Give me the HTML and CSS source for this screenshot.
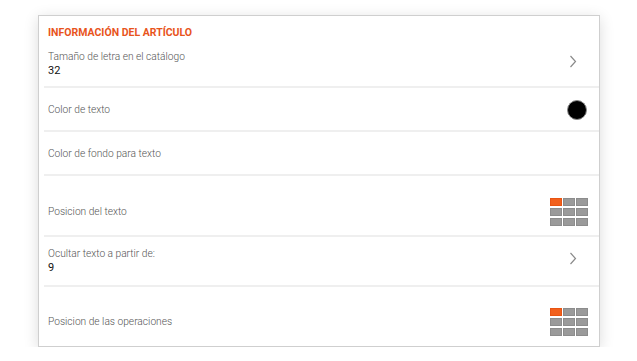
FILE: index.html
```html
<!DOCTYPE html>
<html lang="es">
<head>
    <meta charset="UTF-8">
    <meta name="viewport" content="width=device-width, initial-scale=1.0">
    <title>Información del artículo</title>
    <link rel="stylesheet" href="styles.css">
</head>
<body>

<div class="card">
    <div class="header">INFORMACIÓN DEL ARTÍCULO</div>

    <div class="row row-43">
        <div class="text">
            <div class="label">Tamaño de letra en el catálogo</div>
            <div class="value">32</div>
        </div>
        <svg class="chevron" width="8" height="13" viewBox="0 0 8 13">
            <path d="M1.5 1 L6.5 6.5 L1.5 12" fill="none" stroke="#8a8a8a" stroke-width="1.2"/>
        </svg>
    </div>

    <div class="row row-44">
        <div class="label">Color de texto</div>
        <span class="swatch"></span>
    </div>

    <div class="row row-44">
        <div class="label">Color de fondo para texto</div>
    </div>

    <div class="row row-pos">
        <div class="label">Posicion del texto</div>
        <div class="grid">
            <span class="cell active"></span><span class="cell"></span><span class="cell"></span>
            <span class="cell"></span><span class="cell"></span><span class="cell"></span>
            <span class="cell"></span><span class="cell"></span><span class="cell"></span>
        </div>
    </div>

    <div class="row row-50">
        <div class="text">
            <div class="label">Ocultar texto a partir de:</div>
            <div class="value">9</div>
        </div>
        <svg class="chevron" width="8" height="13" viewBox="0 0 8 13">
            <path d="M1.5 1 L6.5 6.5 L1.5 12" fill="none" stroke="#8a8a8a" stroke-width="1.2"/>
        </svg>
    </div>

    <div class="row row-last">
        <div class="label">Posicion de las operaciones</div>
        <div class="grid">
            <span class="cell active"></span><span class="cell"></span><span class="cell"></span>
            <span class="cell"></span><span class="cell"></span><span class="cell"></span>
            <span class="cell"></span><span class="cell"></span><span class="cell"></span>
        </div>
    </div>
</div>

</body>
</html>
```

FILE: styles.css
```css
body {
    margin: 0;
    background: #fff;
    font-family: Roboto, 'Liberation Sans', sans-serif;
}
.card {
    box-sizing: border-box;
    margin: 15px 0 0 38px;
    width: 562px;
    height: 332px;
    background: #fff;
    border: 1px solid #cfcfcf;
    box-shadow: 0 3px 14px rgba(0, 0, 0, 0.14);
}
.header {
    box-sizing: border-box;
    height: 28px;
    padding: 11px 0 0 9px;
    font-size: 10.5px;
    font-weight: bold;
    color: #e8541c;
    line-height: 12px;
}
.row {
    box-sizing: border-box;
    display: flex;
    align-items: center;
    justify-content: space-between;
    margin-left: 5px;
    padding: 0 11px 0 4px;
    border-bottom: 2px solid #efefef;
}
.row-43 {
    height: 44px;
    padding-bottom: 2px;
}
.row-44 {
    height: 44px;
    padding-top: 2px;
}
.row-pos {
    height: 61px;
    padding-top: 12px;
}
.row-50 {
    height: 50px;
}
.row-last {
    height: 59px;
    padding-top: 11px;
    border-bottom: none;
}
.label {
    font-size: 10.2px;
    font-weight: 300;
    color: #555;
    line-height: 14px;
}
.value {
    font-size: 11px;
    color: #111;
    line-height: 14px;
}
.chevron {
    margin: 0 11px 6px 0;
}
.swatch {
    box-sizing: border-box;
    width: 20px;
    height: 20px;
    border-radius: 50%;
    background: #000;
    border: 1px solid #8a8a8a;
    margin-right: 1px;
}
.grid {
    display: grid;
    grid-template-columns: repeat(3, 12px);
    grid-auto-rows: 8px;
    gap: 2px 1px;
}
.cell {
    background: #9a9a9a;
    border: 1px solid #8c8c8c;
    box-sizing: border-box;
}
.cell.active {
    background: #f2601c;
    border-color: #e85412;
}
```
